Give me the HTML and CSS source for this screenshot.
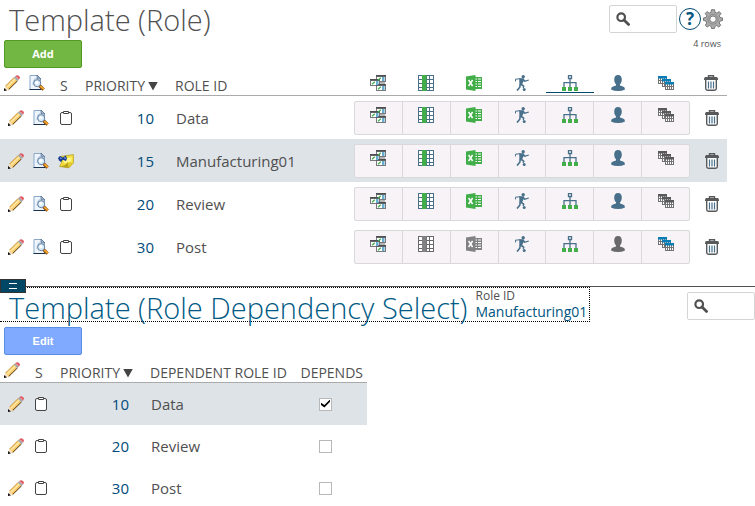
FILE: index.html
```html
<!DOCTYPE html>
<html lang="en">
<head>
<meta charset="utf-8">
<title>Template (Role)</title>
<link rel="stylesheet" href="styles.css">
</head>
<body>
<svg class="sprite" aria-hidden="true">
  <symbol id="pencil" viewBox="0 0 16 16">
    <path d="M1 15 1.6 10.8 10.2 2.2 13.8 5.8 5.2 14.4Z" fill="#f8c964"/>
    <path d="M1.6 11 10.2 2.4" stroke="#c08a3e" stroke-width=".8"/>
    <path d="M3 12.2 11.4 3.8" stroke="#ffe6a0" stroke-width="1.8"/>
    <path d="M4.6 14.6 13.6 5.8" stroke="#4d351d" stroke-width="1"/>
    <path d="M1 15 1.6 11.2 4.8 14.4Z" fill="#f3dfc4"/>
    <path d="M0 16V13L3 15.4Z" fill="#111"/>
    <path d="M9.8 2.6 11.2 1.2 14.8 4.8 13.4 6.2Z" fill="#9dabb3"/>
    <path d="M11.2 1.3Q12.8-.4 14.9.9T14.9 4.7Z" fill="#dd5a60"/>
    <path d="M12.2 1.6 14.2 3.6" stroke="#f5a1a4"/>
  </symbol>
  <symbol id="view" viewBox="0 0 16 16">
    <path d="M1 .5H8.5L11.5 3.5V14.5H1Z" fill="#eef5fc" stroke="#8ba9c8"/>
    <path d="M.5 14.5H12" stroke="#17314e"/>
    <path d="M8 0 12 4H8Z" fill="#9eb4cc" stroke="#526e90" stroke-width=".7"/>
    <path d="M4.2 10Q4 4.8 7.5 3.4" fill="none" stroke="#b5cde5" stroke-width="1.5"/>
    <circle cx="8.2" cy="8.2" r="3.5" fill="#dceefa" stroke="#6580a0" stroke-width="1"/>
    <circle cx="7.6" cy="7.4" r="1.5" fill="#fff"/>
    <path d="m10.8 10.9 3.8 3.7" stroke="#78420f" stroke-width="3.4"/>
    <path d="m11.3 10.9 3.6 3.3" stroke="#f1a32b" stroke-width="2"/>
  </symbol>
  <symbol id="clip" viewBox="0 0 12 14">
    <path d="M3 1.5H2Q.5 1.5.5 3V12Q.5 13.5 2 13.5H10Q11.5 13.5 11.5 12V3Q11.5 1.5 10 1.5H9" fill="#fff" stroke="#444"/>
    <path d="M3.5.5H8.5V2.5H3.5Z" fill="#fff" stroke="#444"/>
  </symbol>
  <symbol id="note" viewBox="0 0 16 15">
    <path d="M2 3 15.5 1V9.5L11 14.3 1.5 13 3.8 8.5Z" fill="#f1dc3c" stroke="#a99414" stroke-width=".6"/>
    <path d="M5 5.5 13.5 3.5V8L6 10Z" fill="#fff58b"/>
    <path d="M1.5 13Q7 12.5 9.8 8.8L11 14.5Z" fill="#b8a31c"/>
    <path d="M9.5 9 15 9.4 10.9 13.4Z" fill="#e1c82b"/>
    <path d="M0 4.5 2 2.5 5 4 7.8 2 9 5 8 7.5 4.8 6.3 3 8.5 1 7Z" fill="#173990"/>
    <path d="m2 4.3 1.7.7M6.5 3.8l1 1.5" stroke="#76a2ee" stroke-width="1.3"/>
  </symbol>
  <symbol id="windows" viewBox="0 0 16 16">
    <path d="M10 6H15V10H10Z" fill="#b5b5b5"/>
    <path d="M6 0H16V7H6Z" fill="#77787a"/><path d="M7 2H15V6H7Z" fill="#fff"/>
    <path d="M0 4H10V11H0Z" fill="#77787a"/><path d="M1 6H9V10H1Z" fill="#fff"/>
    <path d="M6 9H16V16H6Z" fill="#77787a"/><path d="M7 11H15V15H7Z" fill="#fff"/>
    <path d="M6 0H16V1.5H6ZM0 4H10V5.5H0ZM6 9H16V10.5H6Z" fill="#4d4e50"/>
    <path d="M12 2H14.5V6H12ZM6 6H8.5V10H6ZM12 11H14.5V15H12Z" fill="#67acd1"/>
    <path d="m8 5.2 2.8-2.4M2 9.2 4.8 6.8M8 14.2l2.8-2.4" fill="none" stroke="#42ae49" stroke-width="1.3"/>
  </symbol>
  <symbol id="columns" viewBox="0 0 16 16">
    <path d="M0 0H16V16H0Z" fill="var(--ink)"/>
    <path d="M1 1H4V4H1ZM1 5H4V8H1ZM1 9H4V12H1ZM1 13H4V15H1ZM9 1H11V4H9ZM9 5H11V8H9ZM9 9H11V12H9ZM9 13H11V15H9ZM12 1H15V4H12ZM12 5H15V8H12ZM12 9H15V12H12ZM12 13H15V15H12Z" fill="#fff"/>
    <path d="M4 0H8.5V16H4Z" fill="var(--accent)"/>
  </symbol>
  <symbol id="sheet" viewBox="0 0 16 16">
    <path d="M9 2H16V14H9Z" fill="var(--accent)"/>
    <path d="M9 4H11M12 4H15M9 6.5H11M12 6.5H15M9 9H11M12 9H15M9 11.5H11M12 11.5H15" stroke="#fff"/>
    <path d="M0 1.5 9.5 0V16L0 14.5Z" fill="var(--accent)"/>
    <path d="m2.6 5 4 6M6.6 5l-4 6" stroke="#fff" stroke-width="1.5"/>
  </symbol>
  <symbol id="player" viewBox="0 0 16 16">
    <circle cx="9.2" cy="1.7" r="1.7" fill="var(--ink)"/>
    <path d="M1.5 6.4V4.2L6.5 3.7" fill="none" stroke="var(--ink)" stroke-width="1"/>
    <path d="M5.2 3.3H9.5L11 5.4 14.6 4.4 15 5.4 10.6 7 9.4 6.2 8.3 9 10.6 11 9.8 13.2 8.6 12.8 8.9 11.6 5.4 9.4Z" fill="var(--ink)"/>
    <path d="M6.3 8.8 5.8 12.2 3 15.6" fill="none" stroke="var(--ink)" stroke-width="1.6"/>
    <circle cx="10.2" cy="14.5" r="1.5" fill="var(--ink)"/>
  </symbol>
  <symbol id="tree" viewBox="0 0 16 16">
    <path d="M6.5.5H9.5V3.5H6.5Z" fill="#fff" stroke="var(--ink)" stroke-width="1.3"/>
    <path d="M8 4V12M2 12V7.7H14V12" fill="none" stroke="var(--ink)" stroke-width="1.3"/>
    <path d="M0 12H4V16H0ZM6 12H10V16H6ZM12 12H16V16H12Z" fill="#42ae49"/>
  </symbol>
  <symbol id="person" viewBox="0 0 16 16">
    <path d="M8 0C5.4 0 4.2 1.8 4.2 4.5 4.2 6.8 5 8.4 6 9.3V10.6L3 11.6Q1 12.3 1 14.4 4 16 8 16T15 14.4Q15 12.3 13 11.6L10 10.6V9.3C11 8.4 11.8 6.8 11.8 4.5 11.8 1.8 10.6 0 8 0Z" fill="var(--ink)"/>
  </symbol>
  <symbol id="grids" viewBox="0 0 16 16">
    <g id="grid-sheet"><path d="M0 1H9V9H0Z" fill="#fff"/><path d="M.5 3V9M2.5 3V9M4.5 3V9M6.5 3V9M8.5 3V9M0 5.5H9M0 8.5H9" stroke="#737375"/><path d="M0 1H9V3.5H0Z" fill="var(--cap)"/></g>
    <use href="#grid-sheet" x="4" y="3"/>
    <use href="#grid-sheet" x="7" y="6"/>
  </symbol>
  <symbol id="trash" viewBox="0 0 14 16">
    <path d="M4.5 2V.7H9.5V2" fill="none" stroke="#58595b" stroke-width="1.4"/>
    <path d="M0 3.5 1 2H13L14 3.5V5H0Z" fill="#58595b"/>
    <path d="M1.7 5V13.5Q1.7 15.2 3.4 15.2H10.6Q12.3 15.2 12.3 13.5V5" fill="#fff" stroke="#58595b" stroke-width="1.4"/>
    <path d="M4.5 6.5V13.5M7 6.5V13.5M9.5 6.5V13.5" stroke="#49708b" stroke-width="1.2"/>
  </symbol>
  <symbol id="lens" viewBox="0 0 14 14">
    <circle cx="5.2" cy="5.2" r="3.8" fill="none" stroke="#505050" stroke-width="2.2"/>
    <path d="m8 8 4.6 4.4" stroke="#505050" stroke-width="2.8" stroke-linecap="round"/>
  </symbol>
  <symbol id="gear" viewBox="0 0 20 20">
    <path d="M8.5.7H11.5L12 3.3 14 4.2 16.2 2.6 18 4.5 16.3 6.8 17 8.5 19.5 9V11.5L17 12 16.2 14 17.7 16.2 15.8 18 13.6 16.5 12 17.1 11.5 19.5H8.5L8 17.1 6.3 16.5 4.2 18 2.3 16.2 3.8 14 3 12 .5 11.5V9L3 8.5 3.8 6.8 2.2 4.5 4 2.6 6.2 4.2 8 3.3Z" fill="#ababab" stroke="#777" stroke-width="1"/>
    <circle cx="10" cy="10.2" r="5" fill="none" stroke="#8b8b8b" stroke-width="1"/>
    <circle cx="10" cy="10.2" r="3.2" fill="#fff" stroke="#777" stroke-width="1"/>
  </symbol>
</svg>

<section class="panel" aria-labelledby="role-title">
  <header class="bar">
    <h1 class="title" id="role-title">Template (Role)</h1>
    <div class="tools">
      <label class="search"><svg class="lens"><use href="#lens"/></svg><input type="search" aria-label="Search roles"></label>
      <button class="help" type="button" aria-label="Help">?</button>
      <button class="icon-btn" type="button" aria-label="Settings"><svg class="gear"><use href="#gear"/></svg></button>
    </div>
  </header>
  <div class="actions">
    <button class="btn btn-add" type="button">Add</button>
    <span class="count">4 rows</span>
  </div>
  <table class="grid roles">
    <colgroup><col class="c-icon"><col class="c-icon"><col class="c-status"><col class="c-priority"><col><col class="c-links"><col class="c-trash"></colgroup>
    <thead>
      <tr>
        <th><svg class="i16"><use href="#pencil"/></svg></th>
        <th><svg class="i16"><use href="#view"/></svg></th>
        <th class="status">S</th>
        <th class="num"><span class="sort">PRIORITY</span></th>
        <th class="name">ROLE ID</th>
        <th class="links">
          <div class="tabs">
            <button type="button" aria-label="Windows"><svg class="i16"><use href="#windows"/></svg></button>
            <button type="button" aria-label="Columns"><svg class="i16"><use href="#columns"/></svg></button>
            <button type="button" aria-label="Spreadsheet"><svg class="i16"><use href="#sheet"/></svg></button>
            <button type="button" aria-label="Actions"><svg class="i16"><use href="#player"/></svg></button>
            <button type="button" class="current" aria-label="Dependencies"><svg class="i16"><use href="#tree"/></svg></button>
            <button type="button" aria-label="Users"><svg class="i16"><use href="#person"/></svg></button>
            <button type="button" aria-label="Grids"><svg class="i16"><use href="#grids"/></svg></button>
          </div>
        </th>
        <th class="del"><svg class="trash"><use href="#trash"/></svg></th>
      </tr>
    </thead>
    <tbody>
      <tr>
        <td><button class="icon-btn" type="button" aria-label="Edit"><svg class="i16"><use href="#pencil"/></svg></button></td>
        <td><button class="icon-btn" type="button" aria-label="View"><svg class="i16"><use href="#view"/></svg></button></td>
        <td class="status"><button class="icon-btn" type="button" aria-label="Notes"><svg class="clip"><use href="#clip"/></svg></button></td>
        <td class="num">10</td>
        <td class="name">Data</td>
        <td class="links">
          <div class="strip">
            <button type="button" aria-label="Windows"><svg class="i16"><use href="#windows"/></svg></button>
            <button type="button" aria-label="Columns"><svg class="i16"><use href="#columns"/></svg></button>
            <button type="button" aria-label="Spreadsheet"><svg class="i16"><use href="#sheet"/></svg></button>
            <button type="button" aria-label="Actions"><svg class="i16"><use href="#player"/></svg></button>
            <button type="button" aria-label="Dependencies"><svg class="i16"><use href="#tree"/></svg></button>
            <button type="button" aria-label="Users"><svg class="i16"><use href="#person"/></svg></button>
            <button type="button" class="empty" aria-label="Grids"><svg class="i16"><use href="#grids"/></svg></button>
          </div>
        </td>
        <td class="del"><button class="icon-btn" type="button" aria-label="Delete"><svg class="trash"><use href="#trash"/></svg></button></td>
      </tr>
      <tr class="selected">
        <td><button class="icon-btn" type="button" aria-label="Edit"><svg class="i16"><use href="#pencil"/></svg></button></td>
        <td><button class="icon-btn" type="button" aria-label="View"><svg class="i16"><use href="#view"/></svg></button></td>
        <td class="status has-note"><button class="icon-btn" type="button" aria-label="Notes"><svg class="i16"><use href="#note"/></svg></button></td>
        <td class="num">15</td>
        <td class="name">Manufacturing01</td>
        <td class="links">
          <div class="strip">
            <button type="button" aria-label="Windows"><svg class="i16"><use href="#windows"/></svg></button>
            <button type="button" aria-label="Columns"><svg class="i16"><use href="#columns"/></svg></button>
            <button type="button" aria-label="Spreadsheet"><svg class="i16"><use href="#sheet"/></svg></button>
            <button type="button" aria-label="Actions"><svg class="i16"><use href="#player"/></svg></button>
            <button type="button" aria-label="Dependencies"><svg class="i16"><use href="#tree"/></svg></button>
            <button type="button" aria-label="Users"><svg class="i16"><use href="#person"/></svg></button>
            <button type="button" class="empty" aria-label="Grids"><svg class="i16"><use href="#grids"/></svg></button>
          </div>
        </td>
        <td class="del"><button class="icon-btn" type="button" aria-label="Delete"><svg class="trash"><use href="#trash"/></svg></button></td>
      </tr>
      <tr>
        <td><button class="icon-btn" type="button" aria-label="Edit"><svg class="i16"><use href="#pencil"/></svg></button></td>
        <td><button class="icon-btn" type="button" aria-label="View"><svg class="i16"><use href="#view"/></svg></button></td>
        <td class="status"><button class="icon-btn" type="button" aria-label="Notes"><svg class="clip"><use href="#clip"/></svg></button></td>
        <td class="num">20</td>
        <td class="name">Review</td>
        <td class="links">
          <div class="strip">
            <button type="button" aria-label="Windows"><svg class="i16"><use href="#windows"/></svg></button>
            <button type="button" aria-label="Columns"><svg class="i16"><use href="#columns"/></svg></button>
            <button type="button" aria-label="Spreadsheet"><svg class="i16"><use href="#sheet"/></svg></button>
            <button type="button" aria-label="Actions"><svg class="i16"><use href="#player"/></svg></button>
            <button type="button" aria-label="Dependencies"><svg class="i16"><use href="#tree"/></svg></button>
            <button type="button" aria-label="Users"><svg class="i16"><use href="#person"/></svg></button>
            <button type="button" class="empty" aria-label="Grids"><svg class="i16"><use href="#grids"/></svg></button>
          </div>
        </td>
        <td class="del"><button class="icon-btn" type="button" aria-label="Delete"><svg class="trash"><use href="#trash"/></svg></button></td>
      </tr>
      <tr>
        <td><button class="icon-btn" type="button" aria-label="Edit"><svg class="i16"><use href="#pencil"/></svg></button></td>
        <td><button class="icon-btn" type="button" aria-label="View"><svg class="i16"><use href="#view"/></svg></button></td>
        <td class="status"><button class="icon-btn" type="button" aria-label="Notes"><svg class="clip"><use href="#clip"/></svg></button></td>
        <td class="num">30</td>
        <td class="name">Post</td>
        <td class="links">
          <div class="strip">
            <button type="button" aria-label="Windows"><svg class="i16"><use href="#windows"/></svg></button>
            <button type="button" class="empty" aria-label="Columns"><svg class="i16"><use href="#columns"/></svg></button>
            <button type="button" class="empty" aria-label="Spreadsheet"><svg class="i16"><use href="#sheet"/></svg></button>
            <button type="button" aria-label="Actions"><svg class="i16"><use href="#player"/></svg></button>
            <button type="button" aria-label="Dependencies"><svg class="i16"><use href="#tree"/></svg></button>
            <button type="button" class="empty" aria-label="Users"><svg class="i16"><use href="#person"/></svg></button>
            <button type="button" aria-label="Grids"><svg class="i16"><use href="#grids"/></svg></button>
          </div>
        </td>
        <td class="del"><button class="icon-btn" type="button" aria-label="Delete"><svg class="trash"><use href="#trash"/></svg></button></td>
      </tr>
    </tbody>
  </table>
</section>

<section class="panel detail" aria-labelledby="dep-title">
  <button class="handle" type="button" aria-label="Resize panel"></button>
  <header class="bar">
    <div class="focus">
      <h2 class="title" id="dep-title">Template (Role Dependency Select)</h2>
      <dl class="context"><dt>Role ID</dt><dd>Manufacturing01</dd></dl>
    </div>
    <div class="tools">
      <label class="search"><svg class="lens"><use href="#lens"/></svg><input type="search" aria-label="Search dependencies"></label>
    </div>
  </header>
  <div class="actions">
    <button class="btn btn-edit" type="button">Edit</button>
  </div>
  <table class="grid deps">
    <colgroup><col class="c-icon"><col class="c-status"><col class="c-priority"><col class="c-dep"><col class="c-check"></colgroup>
    <thead>
      <tr>
        <th><svg class="i16"><use href="#pencil"/></svg></th>
        <th class="status">S</th>
        <th class="num"><span class="sort">PRIORITY</span></th>
        <th class="name">DEPENDENT ROLE ID</th>
        <th class="check">DEPENDS</th>
      </tr>
    </thead>
    <tbody>
      <tr class="selected">
        <td><button class="icon-btn" type="button" aria-label="Edit"><svg class="i16"><use href="#pencil"/></svg></button></td>
        <td class="status"><button class="icon-btn" type="button" aria-label="Notes"><svg class="clip"><use href="#clip"/></svg></button></td>
        <td class="num">10</td>
        <td class="name">Data</td>
        <td class="check"><input type="checkbox" aria-label="Depends on Data" checked></td>
      </tr>
      <tr>
        <td><button class="icon-btn" type="button" aria-label="Edit"><svg class="i16"><use href="#pencil"/></svg></button></td>
        <td class="status"><button class="icon-btn" type="button" aria-label="Notes"><svg class="clip"><use href="#clip"/></svg></button></td>
        <td class="num">20</td>
        <td class="name">Review</td>
        <td class="check"><input type="checkbox" aria-label="Depends on Review"></td>
      </tr>
      <tr>
        <td><button class="icon-btn" type="button" aria-label="Edit"><svg class="i16"><use href="#pencil"/></svg></button></td>
        <td class="status"><button class="icon-btn" type="button" aria-label="Notes"><svg class="clip"><use href="#clip"/></svg></button></td>
        <td class="num">30</td>
        <td class="name">Post</td>
        <td class="check"><input type="checkbox" aria-label="Depends on Post"></td>
      </tr>
    </tbody>
  </table>
</section>
</body>
</html>
```
FILE: styles.css
```css
* { box-sizing: border-box; }

body {
  --ink: #49708b;
  --accent: #42ae49;
  --cap: #087cb5;
  margin: 0;
  background: #fff;
  color: #505050;
  font: 15px/20px "Open Sans", "Noto Sans", sans-serif;
}

button, input { font: inherit; }
button { cursor: pointer; }
svg { display: block; }
.sprite { position: absolute; width: 0; height: 0; }

.i16 { width: 16px; height: 16px; }
.clip { width: 12px; height: 14px; }
.trash { width: 14px; height: 16px; }
.lens { width: 14px; height: 14px; flex: none; }
.gear { width: 20px; height: 20px; }

.icon-btn {
  display: block;
  padding: 0;
  border: 0;
  background: none;
}

/* Panel header */
.bar {
  display: flex;
  justify-content: space-between;
  align-items: flex-start;
  height: 40px;
  padding-right: 32px;
}
.title {
  margin: 0;
  padding-left: 9px;
  font-size: 29px;
  line-height: 40px;
  font-weight: 300;
  white-space: nowrap;
}
.tools {
  display: flex;
  align-items: center;
  gap: 2px;
  padding-top: 5px;
}
.search {
  display: flex;
  align-items: center;
  width: 68px;
  height: 28px;
  padding-left: 6px;
  border: 1px solid #d4d4d4;
  border-radius: 2px;
}
.search input {
  width: 100%;
  min-width: 0;
  border: 0;
  outline: 0;
  background: none;
}
.help {
  width: 22px;
  height: 22px;
  padding: 0;
  border: 1px solid #004b73;
  border-radius: 50%;
  background: #fff;
  color: #005581;
  font-size: 17px;
  line-height: 20px;
  font-weight: 700;
}

.actions {
  display: flex;
  justify-content: space-between;
  align-items: flex-start;
  padding: 0 34px 0 4px;
}
.btn {
  width: 78px;
  height: 28px;
  padding: 0;
  border: 1px solid;
  border-radius: 2px;
  color: #fff;
  font-size: 11px;
  line-height: 24px;
  font-weight: 700;
}
.btn-add { background: #72b743; border-color: #529a22; }
.btn-edit { background: #7faaff; border-color: #5b8ee6; font-family: "Liberation Sans", sans-serif; }
.count { font-size: 9px; line-height: 8px; }

/* Tables */
.grid {
  border-collapse: separate;
  border-spacing: 0;
  table-layout: fixed;
}
.roles { width: calc(100% - 28px); }
.deps { width: 367px; }
.c-icon { width: 25px; }
.c-status { width: 30px; }
.c-priority { width: 78px; }
.c-links { width: 336px; }
.c-trash { width: 37px; }
.c-check { width: 83px; }

.grid th {
  height: 28px;
  padding: 0 0 1px 4px;
  border-bottom: 1px solid #aaa;
  font-size: 14px;
  line-height: 16px;
  font-weight: 400;
  text-align: left;
  vertical-align: bottom;
  white-space: nowrap;
}
.grid th > svg { margin-bottom: 3px; }
.grid td {
  height: 43px;
  padding: 0 0 0 8px;
}
.deps td { height: 42px; }
.selected { background: #dee3e7; }

.grid .num { text-align: right; }
.grid th.num { padding-right: 0; }
.grid td.num { padding-right: 4px; color: #004b7b; }
.grid .name { padding-left: 17px; }
.grid td.name { padding-left: 18px; }
.grid .status { padding-left: 10px; }
.grid td.has-note { padding-left: 8px; }
.grid .del { padding-left: 14px; }
.grid td.del { padding-left: 15px; }
.grid .links { padding-left: 0; }

.sort {
  display: inline-flex;
  align-items: center;
  gap: 3px;
}
.sort::after {
  content: "";
  width: 10px;
  height: 9px;
  background: #444;
  clip-path: polygon(0 0, 100% 0, 50% 100%);
}

.tabs, .strip { display: flex; }
.tabs button, .strip button {
  display: flex;
  flex: 1;
  justify-content: center;
  padding: 0;
  border: 0;
  background: none;
}
.grid th.links { padding-bottom: 2px; }
.tabs button { height: 18px; }
.tabs .current { border-bottom: 1px solid #004b6b; }
.strip {
  height: 34px;
  border: 1px solid #d9d9dc;
  border-radius: 2px;
  background: #f7f3f7;
}
.strip button { padding-top: 5px; }
.strip button + button { border-left: 1px solid #d9d9dc; }
.empty {
  --ink: #69696b;
  --accent: #828284;
  --cap: #59595b;
}

/* Dependency panel */
.detail {
  position: relative;
  margin-top: 18px;
  border-top: 1px solid #505050;
}
.handle {
  position: absolute;
  top: -8px;
  left: 0;
  width: 26px;
  height: 14px;
  padding: 0;
  border: 1px solid #333;
  background: #004765;
}
.handle::before {
  content: "";
  display: block;
  width: 8px;
  height: 4px;
  margin: 0 auto;
  border: solid #fff;
  border-width: 1px 0;
}
.detail .bar { padding-right: 0; }
.detail .title { color: #005a85; }
.focus {
  display: flex;
  height: 35px;
  border: 1px dotted #000;
  border-left: 0;
}
.context {
  margin: 0;
  padding: 0 2px 0 8px;
  font-size: 12px;
  line-height: 16px;
}
.context dd {
  margin: 0;
  color: #005581;
  font-size: 14px;
}
.check { text-align: center; }
.grid th.check { padding: 0 4px 1px 0; text-align: right; }
.grid td.check { padding: 0; }
.check input {
  appearance: none;
  display: block;
  width: 13px;
  height: 13px;
  margin: 0 auto;
  border: 1px solid #b8b8b8;
  background: #fff;
}
.check input:checked::before {
  content: "";
  display: block;
  width: 9px;
  height: 8px;
  margin: 1px;
  background: #000;
  clip-path: polygon(0 40%, 38% 68%, 100% 0, 100% 28%, 38% 100%, 0 70%);
}
```
